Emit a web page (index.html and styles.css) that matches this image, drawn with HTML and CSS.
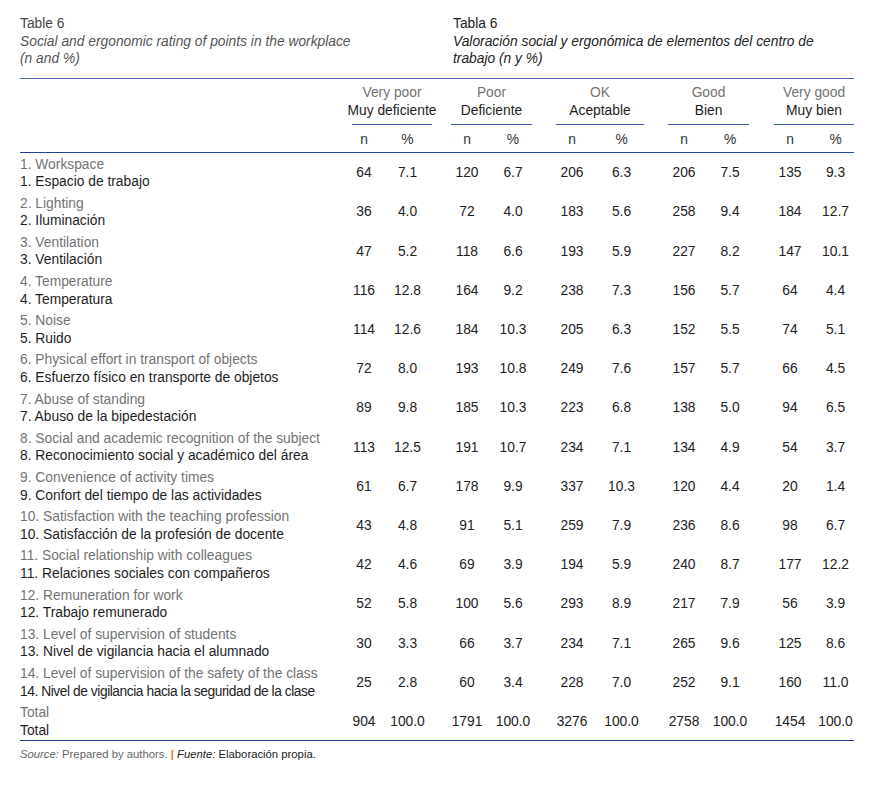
FILE: index.html
```html
<!DOCTYPE html>
<html lang="en">
<head>
<meta charset="utf-8">
<title>Table 6</title>
<link rel="stylesheet" href="styles.css">
</head>
<body>
<div class="page">
  <div class="titles">
    <div class="title title-en">
      <div class="tnum">Table 6</div>
      <div class="tcap">Social and ergonomic rating of points in the workplace<br>(n and %)</div>
    </div>
    <div class="title title-es">
      <div class="tnum">Tabla 6</div>
      <div class="tcap">Valoración social y ergonómica de elementos del centro de<br>trabajo (n y %)</div>
    </div>
  </div>

  <table class="data">
    <colgroup>
      <col class="c-label">
      <col class="c-vpn"><col class="c-vpp">
      <col class="c-sp19">
      <col class="c-n"><col class="c-p81">
      <col class="c-sp24">
      <col class="c-n"><col class="c-p88">
      <col class="c-sp24">
      <col class="c-n"><col class="c-p81">
      <col class="c-sp25">
      <col class="c-n"><col class="c-p80">
    </colgroup>
    <thead>
      <tr class="grp-row">
        <th class="lbl"></th>
        <th colspan="2" class="grp"><div class="grp-in"><span class="en">Very poor</span><span class="es">Muy deficiente</span></div></th>
        <th class="sp"></th>
        <th colspan="2" class="grp"><div class="grp-in"><span class="en">Poor</span><span class="es">Deficiente</span></div></th>
        <th class="sp"></th>
        <th colspan="2" class="grp"><div class="grp-in"><span class="en">OK</span><span class="es">Aceptable</span></div></th>
        <th class="sp"></th>
        <th colspan="2" class="grp"><div class="grp-in"><span class="en">Good</span><span class="es">Bien</span></div></th>
        <th class="sp"></th>
        <th colspan="2" class="grp"><div class="grp-in"><span class="en">Very good</span><span class="es">Muy bien</span></div></th>
      </tr>
      <tr class="sub-row">
        <th class="lbl"></th>
        <th class="n">n</th><th class="p">%</th><th class="sp"></th>
        <th class="n">n</th><th class="p">%</th><th class="sp"></th>
        <th class="n">n</th><th class="p">%</th><th class="sp"></th>
        <th class="n">n</th><th class="p">%</th><th class="sp"></th>
        <th class="n">n</th><th class="p">%</th>
      </tr>
    </thead>
    <tbody>
      <tr><td class="lbl"><span class="en">1. Workspace</span><span class="es">1. Espacio de trabajo</span></td>
        <td class="n">64</td><td class="p">7.1</td><td class="sp"></td><td class="n">120</td><td class="p">6.7</td><td class="sp"></td><td class="n">206</td><td class="p">6.3</td><td class="sp"></td><td class="n">206</td><td class="p">7.5</td><td class="sp"></td><td class="n">135</td><td class="p">9.3</td></tr>
      <tr><td class="lbl"><span class="en">2. Lighting</span><span class="es">2. Iluminación</span></td>
        <td class="n">36</td><td class="p">4.0</td><td class="sp"></td><td class="n">72</td><td class="p">4.0</td><td class="sp"></td><td class="n">183</td><td class="p">5.6</td><td class="sp"></td><td class="n">258</td><td class="p">9.4</td><td class="sp"></td><td class="n">184</td><td class="p">12.7</td></tr>
      <tr><td class="lbl"><span class="en">3. Ventilation</span><span class="es">3. Ventilación</span></td>
        <td class="n">47</td><td class="p">5.2</td><td class="sp"></td><td class="n">118</td><td class="p">6.6</td><td class="sp"></td><td class="n">193</td><td class="p">5.9</td><td class="sp"></td><td class="n">227</td><td class="p">8.2</td><td class="sp"></td><td class="n">147</td><td class="p">10.1</td></tr>
      <tr><td class="lbl"><span class="en">4. Temperature</span><span class="es">4. Temperatura</span></td>
        <td class="n">116</td><td class="p">12.8</td><td class="sp"></td><td class="n">164</td><td class="p">9.2</td><td class="sp"></td><td class="n">238</td><td class="p">7.3</td><td class="sp"></td><td class="n">156</td><td class="p">5.7</td><td class="sp"></td><td class="n">64</td><td class="p">4.4</td></tr>
      <tr><td class="lbl"><span class="en">5. Noise</span><span class="es">5. Ruido</span></td>
        <td class="n">114</td><td class="p">12.6</td><td class="sp"></td><td class="n">184</td><td class="p">10.3</td><td class="sp"></td><td class="n">205</td><td class="p">6.3</td><td class="sp"></td><td class="n">152</td><td class="p">5.5</td><td class="sp"></td><td class="n">74</td><td class="p">5.1</td></tr>
      <tr><td class="lbl"><span class="en">6. Physical effort in transport of objects</span><span class="es">6. Esfuerzo físico en transporte de objetos</span></td>
        <td class="n">72</td><td class="p">8.0</td><td class="sp"></td><td class="n">193</td><td class="p">10.8</td><td class="sp"></td><td class="n">249</td><td class="p">7.6</td><td class="sp"></td><td class="n">157</td><td class="p">5.7</td><td class="sp"></td><td class="n">66</td><td class="p">4.5</td></tr>
      <tr><td class="lbl"><span class="en">7. Abuse of standing</span><span class="es">7. Abuso de la bipedestación</span></td>
        <td class="n">89</td><td class="p">9.8</td><td class="sp"></td><td class="n">185</td><td class="p">10.3</td><td class="sp"></td><td class="n">223</td><td class="p">6.8</td><td class="sp"></td><td class="n">138</td><td class="p">5.0</td><td class="sp"></td><td class="n">94</td><td class="p">6.5</td></tr>
      <tr><td class="lbl"><span class="en">8. Social and academic recognition of the subject</span><span class="es">8. Reconocimiento social y académico del área</span></td>
        <td class="n">113</td><td class="p">12.5</td><td class="sp"></td><td class="n">191</td><td class="p">10.7</td><td class="sp"></td><td class="n">234</td><td class="p">7.1</td><td class="sp"></td><td class="n">134</td><td class="p">4.9</td><td class="sp"></td><td class="n">54</td><td class="p">3.7</td></tr>
      <tr><td class="lbl"><span class="en">9. Convenience of activity times</span><span class="es">9. Confort del tiempo de las actividades</span></td>
        <td class="n">61</td><td class="p">6.7</td><td class="sp"></td><td class="n">178</td><td class="p">9.9</td><td class="sp"></td><td class="n">337</td><td class="p">10.3</td><td class="sp"></td><td class="n">120</td><td class="p">4.4</td><td class="sp"></td><td class="n">20</td><td class="p">1.4</td></tr>
      <tr><td class="lbl"><span class="en">10. Satisfaction with the teaching profession</span><span class="es">10. Satisfacción de la profesión de docente</span></td>
        <td class="n">43</td><td class="p">4.8</td><td class="sp"></td><td class="n">91</td><td class="p">5.1</td><td class="sp"></td><td class="n">259</td><td class="p">7.9</td><td class="sp"></td><td class="n">236</td><td class="p">8.6</td><td class="sp"></td><td class="n">98</td><td class="p">6.7</td></tr>
      <tr><td class="lbl"><span class="en">11. Social relationship with colleagues</span><span class="es">11. Relaciones sociales con compañeros</span></td>
        <td class="n">42</td><td class="p">4.6</td><td class="sp"></td><td class="n">69</td><td class="p">3.9</td><td class="sp"></td><td class="n">194</td><td class="p">5.9</td><td class="sp"></td><td class="n">240</td><td class="p">8.7</td><td class="sp"></td><td class="n">177</td><td class="p">12.2</td></tr>
      <tr><td class="lbl"><span class="en">12. Remuneration for work</span><span class="es">12. Trabajo remunerado</span></td>
        <td class="n">52</td><td class="p">5.8</td><td class="sp"></td><td class="n">100</td><td class="p">5.6</td><td class="sp"></td><td class="n">293</td><td class="p">8.9</td><td class="sp"></td><td class="n">217</td><td class="p">7.9</td><td class="sp"></td><td class="n">56</td><td class="p">3.9</td></tr>
      <tr><td class="lbl"><span class="en">13. Level of supervision of students</span><span class="es">13. Nivel de vigilancia hacia el alumnado</span></td>
        <td class="n">30</td><td class="p">3.3</td><td class="sp"></td><td class="n">66</td><td class="p">3.7</td><td class="sp"></td><td class="n">234</td><td class="p">7.1</td><td class="sp"></td><td class="n">265</td><td class="p">9.6</td><td class="sp"></td><td class="n">125</td><td class="p">8.6</td></tr>
      <tr><td class="lbl"><span class="en">14. Level of supervision of the safety of the class</span><span class="es tight">14. Nivel de vigilancia hacia la seguridad de la clase</span></td>
        <td class="n">25</td><td class="p">2.8</td><td class="sp"></td><td class="n">60</td><td class="p">3.4</td><td class="sp"></td><td class="n">228</td><td class="p">7.0</td><td class="sp"></td><td class="n">252</td><td class="p">9.1</td><td class="sp"></td><td class="n">160</td><td class="p">11.0</td></tr>
      <tr class="total"><td class="lbl"><span class="en">Total</span><span class="es">Total</span></td>
        <td class="n">904</td><td class="p">100.0</td><td class="sp"></td><td class="n">1791</td><td class="p">100.0</td><td class="sp"></td><td class="n">3276</td><td class="p">100.0</td><td class="sp"></td><td class="n">2758</td><td class="p">100.0</td><td class="sp"></td><td class="n">1454</td><td class="p">100.0</td></tr>
    </tbody>
  </table>

  <p class="source"><span class="src-en"><em>Source:</em> Prepared by authors.</span> <span class="bar">|</span> <span class="src-es"><em>Fuente:</em> Elaboración propia.</span></p>
</div>
</body>
</html>
```

FILE: styles.css
```css
html, body {
  margin: 0;
  padding: 0;
  background: #ffffff;
}

body {
  font-family: "Liberation Sans", Arial, Helvetica, sans-serif;
  font-size: 13.8px;
  color: #222222;
}

.page {
  padding: 15px 0 0 20px;
  width: 834px;
}

.titles {
  display: flex;
  line-height: 17.5px;
  margin-bottom: 10px;
}

.title-en {
  width: 433px;
  color: #555555;
}

.title-es {
  flex: 1;
  color: #222222;
}

.tcap {
  font-style: italic;
}

.title-en .tnum {
  color: #444444;
}

.data {
  border-collapse: collapse;
  table-layout: fixed;
  width: 834px;
}

.c-label { width: 332px; }
.c-vpn { width: 24px; }
.c-vpp { width: 56px; }
.c-n { width: 32px; }
.c-p81 { width: 49px; }
.c-p88 { width: 56px; }
.c-p80 { width: 48px; }
.c-sp19 { width: 19px; }
.c-sp24 { width: 24px; }
.c-sp25 { width: 25px; }

.data th,
.data td {
  padding: 0;
  font-weight: normal;
  vertical-align: middle;
}

.data .n,
.data .p {
  text-align: center;
  white-space: nowrap;
}

.data td.p,
.data th.p {
  padding-left: 11px;
}

.data tr > :nth-child(3).p {
  padding-left: 7px;
}

.en,
.es {
  display: block;
}

.en {
  color: #737373;
}

.es {
  color: #1e1e1e;
}

.tight {
  letter-spacing: -0.45px;
}

/* header */
.grp-row th {
  border-top: 1px solid #4b6dbb;
  line-height: 18px;
  padding-top: 5px;
  padding-bottom: 4px;
}

.grp-row th.grp {
  border-bottom: 1px solid #3a5eb0;
}

.grp-in {
  display: flex;
  flex-direction: column;
  align-items: center;
  white-space: nowrap;
}

.sub-row th {
  line-height: 17px;
  padding-top: 6px;
  padding-bottom: 4px;
  color: #333333;
  border-bottom: 1px solid #1f449e;
}

/* body */
.data tbody td {
  line-height: 17.6px;
  padding-top: 3px;
  padding-bottom: 1px;
  color: #222222;
}

.data tbody td.lbl {
  text-align: left;
  white-space: nowrap;
}

.data tr.total td {
  border-bottom: 1px solid #1b3a8a;
}

/* source note */
.source {
  margin: 6px 0 0 0;
  font-size: 11.3px;
  line-height: 14px;
  color: #666666;
}

.source em {
  font-style: italic;
}

.src-es {
  color: #222222;
}

.bar {
  color: #e2701f;
  font-weight: bold;
}
```
